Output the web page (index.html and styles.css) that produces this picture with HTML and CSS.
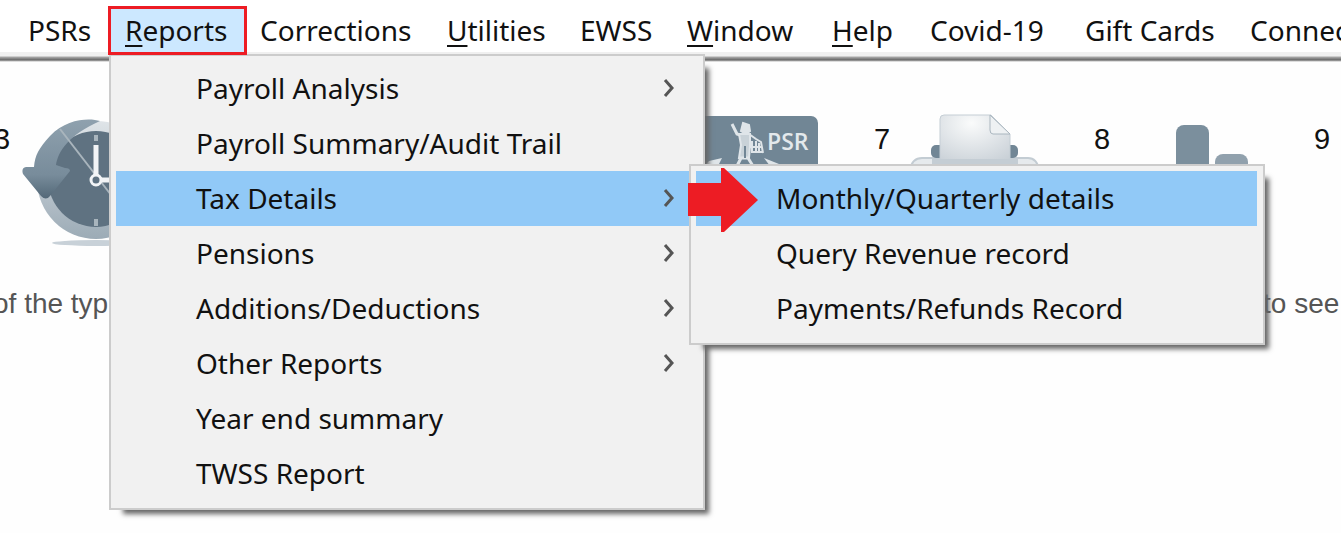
FILE: index.html
```html
<!DOCTYPE html>
<html lang="en">
<head>
<meta charset="utf-8">
<title>Payroll</title>
<link rel="stylesheet" href="styles.css">
</head>
<body>
<header class="menubar">
  <nav>
    <ul class="menubar-list">
      <li><button class="bar-item" type="button">PSRs</button></li>
      <li class="has-menu">
        <button class="bar-item bar-item-open" type="button"><u>R</u>eports</button>
        <ul class="menu menu-reports">
          <li><button class="menu-item" type="button">Payroll Analysis <svg class="chevron" viewBox="0 0 12 20"><path d="M2 2 9 10 2 18"/></svg></button></li>
          <li><button class="menu-item" type="button">Payroll Summary/Audit Trail</button></li>
          <li class="has-menu">
            <button class="menu-item menu-item-active" type="button">Tax Details <svg class="chevron" viewBox="0 0 12 20"><path d="M2 2 9 10 2 18"/></svg></button>
            <ul class="menu menu-tax">
              <li><button class="menu-item menu-item-active" type="button">Monthly/Quarterly details</button></li>
              <li><button class="menu-item" type="button">Query Revenue record</button></li>
              <li><button class="menu-item" type="button">Payments/Refunds Record</button></li>
            </ul>
            <svg class="pointer" viewBox="0 0 70 64"><path d="M0 15H33V0H36L70 32 36 64H33V48H0Z" fill="#ed1c24"/></svg>
          </li>
          <li><button class="menu-item" type="button">Pensions <svg class="chevron" viewBox="0 0 12 20"><path d="M2 2 9 10 2 18"/></svg></button></li>
          <li><button class="menu-item" type="button">Additions/Deductions <svg class="chevron" viewBox="0 0 12 20"><path d="M2 2 9 10 2 18"/></svg></button></li>
          <li><button class="menu-item" type="button">Other Reports <svg class="chevron" viewBox="0 0 12 20"><path d="M2 2 9 10 2 18"/></svg></button></li>
          <li><button class="menu-item" type="button">Year end summary</button></li>
          <li><button class="menu-item" type="button">TWSS Report</button></li>
        </ul>
      </li>
      <li><button class="bar-item" type="button">Corrections</button></li>
      <li><button class="bar-item" type="button"><u>U</u>tilities</button></li>
      <li><button class="bar-item" type="button">EWSS</button></li>
      <li><button class="bar-item" type="button"><u>W</u>indow</button></li>
      <li><button class="bar-item" type="button"><u>H</u>elp</button></li>
      <li><button class="bar-item" type="button">Covid-19</button></li>
      <li><button class="bar-item" type="button">Gift Cards</button></li>
      <li><button class="bar-item" type="button">Connect</button></li>
    </ul>
  </nav>
</header>
<main>
  <div class="steps">
    <div class="step">
      <span class="step-number">3</span>
      <svg class="step-icon" viewBox="0 0 140 140">
        <defs>
          <linearGradient id="ring" x1="0" y1="0" x2="0" y2="1"><stop offset="0" stop-color="#dfe4e8"/><stop offset="1" stop-color="#9cabb6"/></linearGradient>
          <linearGradient id="turn" x1="0" y1="0" x2="0" y2="1"><stop offset="0" stop-color="#8fa1ae"/><stop offset=".7" stop-color="#788c9b"/><stop offset="1" stop-color="#536878"/></linearGradient>
        </defs>
        <ellipse cx="74" cy="133" rx="44" ry="3" fill="#c8d1d8"/>
        <circle cx="74" cy="70" r="59" fill="url(#ring)"/>
        <circle cx="74" cy="69" r="48" fill="#5f7281"/>
        <path d="M78 11C68 8 45 8 28 26C17 38 13 45 12 57L4 57Q-1 58 1 64L19 86Q24 91 28 86L48 61Q48 58 43 58L34 55C36 42 46 25 78 11Z" fill="url(#turn)"/>
        <path d="M38 19 110 112" stroke="#a9b5bd" stroke-width="2"/>
        <path d="M74 25V31M74 109V116" stroke="#a9b5bd" stroke-width="4"/>
        <path d="M74 35V65M79 70H110" stroke="#f2f4f6" stroke-width="5"/>
        <circle cx="74" cy="70" r="5" fill="#5f7281" stroke="#f2f4f6" stroke-width="3"/>
      </svg>
    </div>
    <div class="step step-psr">
      <svg class="step-icon" viewBox="0 0 140 140">
        <rect x="0" y="6" width="136" height="100" rx="7" fill="#718695"/>
        <g fill="none" stroke="#dfe5e9" stroke-width="2">
          <path d="M50 14 55 24 61 26" stroke-width="3"/>
          <path d="M61 13 67 15 68 21 64 24 59 21Z" fill="#dfe5e9"/>
          <path d="M57 24H68V36L67 48H57L59 35Z" fill="#c9d2d8"/>
          <path d="M67 24 74 29 79 32 81 43M70 31V42H81M74 31V42M77 33V42M68 37H80"/>
          <path d="M55 56 59 48H66L71 56" stroke-width="3"/>
        </g>
        <path d="M63 36V48" stroke="#718695" stroke-width="2"/>
        <path d="M22 56 27 51 40 48 36 56ZM82 48 92 52 102 56H88Z" fill="#dfe5e9"/>
        <text x="85" y="40" class="psr-label">PSR</text>
      </svg>
    </div>
    <div class="step step-print">
      <span class="step-number">7</span>
      <svg class="step-icon" viewBox="0 0 140 140">
        <defs>
          <radialGradient id="paper" cx=".45" cy=".15" r=".9"><stop offset="0" stop-color="#fafbfb"/><stop offset="1" stop-color="#c5cdd4"/></radialGradient>
        </defs>
        <path d="M8 66V60Q10 48 20 48H126Q135 48 137 60V66" fill="#e6eaed" stroke="#c3ccd3" stroke-width="2"/>
        <rect x="29" y="35" width="87" height="13" rx="5" fill="#718695"/>
        <path d="M38 59V9Q38 5 42 5H89L108 24V59Z" fill="url(#paper)" stroke="#c5ced5"/>
        <path d="M30 53H116" stroke="#c4cdd4" stroke-width="8"/>
        <path d="M88 5 108 24H91Q88 24 88 20Z" fill="#eef1f3" stroke="#aab6bf"/>
      </svg>
    </div>
    <div class="step">
      <span class="step-number">8</span>
      <svg class="step-icon" viewBox="0 0 140 140">
        <rect x="54" y="15" width="33" height="90" rx="8" fill="#7b8f9d"/>
        <rect x="93" y="44" width="33" height="60" rx="8" fill="#91a1ad"/>
      </svg>
    </div>
    <div class="step">
      <span class="step-number">9</span>
    </div>
  </div>
  <p class="hint"><span>of the typ</span><span>to see</span></p>
</main>
</body>
</html>
```
FILE: styles.css
```css
* { box-sizing: border-box; }
body {
  min-height: 100vh;
  margin: 0;
  overflow: hidden;
  background: #fefefe;
  color: #111;
  font-family: "Noto Sans", "Open Sans", sans-serif;
  font-size: 28px;
  line-height: 36px;
}
ul { margin: 0; padding: 0; list-style: none; }
button {
  border: 0;
  background: none;
  color: inherit;
  font: inherit;
  text-align: left;
  white-space: nowrap;
}
u { text-decoration-thickness: 2px; text-underline-offset: 4px; }

.menubar {
  padding: 6px 0 7px 12px;
  background: linear-gradient(#f0f0f0 0 4px, #aaa 5px, #666 8px, #bbb 9px, #fefefe 10px) bottom / 100% 10px no-repeat #fff;
}
.menubar-list {
  display: grid;
  grid-template-columns: 96px 136px 187px 133px 107px 145px 98px 155px 165px auto;
}
.bar-item { display: block; height: 49px; padding: 0 16px 2px; }
.bar-item-open {
  position: relative;
  z-index: 2;
  width: 139px;
  padding: 0 14px 2px;
  border: 3px solid #ed1c24;
  background: #cce8ff;
}

.has-menu { position: relative; }
.menu {
  position: absolute;
  z-index: 1;
  padding: 5px 6px 7px 5px;
  border: 2px solid #ccc;
  background: #f1f1f1;
  box-shadow: 9px 9px 5px -5px #666;
}
.menu-reports { top: 48px; left: 1px; width: 596px; }
.menu-tax { top: -7px; left: 573px; width: 576px; }
.menu-item {
  display: flex;
  align-items: center;
  justify-content: space-between;
  width: 100%;
  height: 55px;
  padding: 0 22px 2px 80px;
}
.menu-item-active { background: #91c9f7; }
.chevron { width: 12px; height: 20px; fill: none; stroke: #555; stroke-width: 3; }
.pointer { position: absolute; z-index: 2; top: -3px; left: 572px; width: 70px; height: 64px; }

.steps {
  display: grid;
  grid-template-columns: repeat(7, 220px);
  margin: 48px 0 0 -6px;
  font-family: "Liberation Sans", Arial, sans-serif;
  font-size: 29px;
}
.step { display: flex; gap: 12px; }
.step-psr { grid-column: 4; padding-left: 28px; }
.step-number { width: 16px; padding-top: 11px; }
.step-icon { width: 140px; height: 140px; }
.psr-label { fill: #e4e9ec; font: 600 23px "Open Sans", sans-serif; }

.hint {
  display: grid;
  grid-template-columns: 1270px auto;
  margin: 36px 0 0 -7px;
  color: #555;
  font-family: "Liberation Sans", Arial, sans-serif;
  font-size: 28px;
  white-space: nowrap;
}
```
